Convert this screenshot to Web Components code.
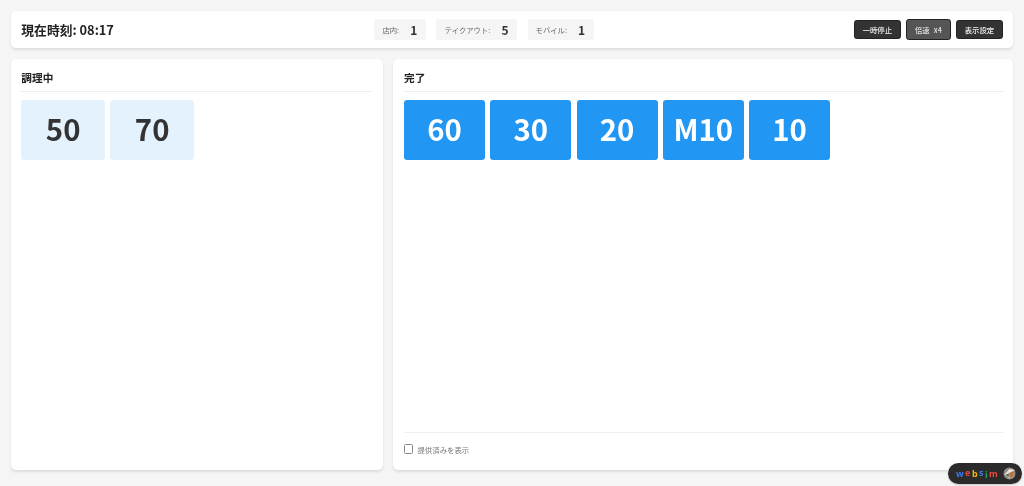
<!DOCTYPE html>
<html lang="ja"><head><meta charset="utf-8"><title>KDS</title>
<style>
html,body{margin:0;height:100%}
body{background:#f5f5f5;font-family:"Noto Sans CJK JP","Noto Sans",sans-serif;color:#333;overflow:hidden}
</style></head><body>
<kds-app></kds-app>
<template id="t-app"><style>
:host{display:flex;flex-direction:column;box-sizing:border-box;height:486px;padding:10.67px;gap:10.67px;filter:blur(.25px)}
.main{flex:1;min-height:0;display:grid;grid-template-columns:3fr 5fr;gap:10.67px;margin-bottom:5px}
</style>
<kds-header></kds-header>
<div class="main">
<kds-panel title="調理中"><kds-tile>50</kds-tile><kds-tile>70</kds-tile></kds-panel>
<kds-panel title="完了" footer><kds-tile done>60</kds-tile><kds-tile done>30</kds-tile><kds-tile done>20</kds-tile><kds-tile done>M10</kds-tile><kds-tile done>10</kds-tile><kds-check slot="footer">提供済みを表示</kds-check></kds-panel>
</div>
<kds-badge></kds-badge></template>

<template id="t-header"><style>
:host{display:flex;justify-content:space-between;align-items:center;height:37.5px;box-sizing:border-box;padding:0 10.67px;background:#fff;border-radius:5.33px;box-shadow:0 1.33px 2.67px rgba(0,0,0,.1)}
.time{font-size:12.8px;font-weight:700;color:#222;white-space:nowrap}
.stats{display:flex;gap:10.67px}
.btns{display:flex;gap:5.33px;align-items:center}
</style>
<div class="time">現在時刻: 08:17</div>
<div class="stats"><kds-stat label="店内:" value="1"></kds-stat><kds-stat label="テイクアウト:" value="5"></kds-stat><kds-stat label="モバイル:" value="1"></kds-stat></div>
<div class="btns"><kds-button>一時停止</kds-button><kds-button active>倍速 x4</kds-button><kds-button>表示設定</kds-button></div></template>

<template id="t-stat"><style>
:host{display:flex;align-items:center;height:21.33px;box-sizing:border-box;padding:0 8px;gap:10.67px;background:#f5f5f5;border-radius:2.67px;white-space:nowrap}
.l{font-size:7.33px;color:#666}
.v{font-size:12px;font-weight:700;color:#333;min-width:8px;text-align:center}
</style><span class="l"></span><span class="v"></span></template>

<template id="t-button"><style>
:host{display:flex;align-items:center;height:19.33px;box-sizing:border-box;padding:0 7.6px;background:#333;color:#f2f2f2;border:.67px solid #222;border-radius:2.67px;font-size:7.33px;font-weight:500;white-space:nowrap}
:host([active]){background:#555;color:#e0e0e0;height:20.67px;border:1.33px solid #222;word-spacing:2.6px;padding:0 8px}
</style><slot></slot></template>

<template id="t-panel"><style>
:host{display:flex;flex-direction:column;min-width:0;box-sizing:border-box;padding:10.67px;background:#fff;border-radius:5.33px;box-shadow:0 1.33px 2.67px rgba(0,0,0,.1)}
h2{margin:.8px 0 8px;padding-bottom:4.53px;border-bottom:.67px solid #eee;font-size:10.67px;line-height:16px;font-weight:700;color:#222}
.grid{flex:1;display:grid;grid-template-columns:repeat(auto-fill,minmax(80px,1fr));grid-auto-rows:60px;gap:5.33px;align-content:start}
.foot{border-top:.67px solid #eee;padding-top:8px;height:18.67px;box-sizing:content-box;display:none}
:host([footer]) .foot{display:block}
</style><h2></h2><div class="grid"><slot></slot></div><div class="foot"><slot name="footer"></slot></div></template>

<template id="t-tile"><style>
:host{display:flex;align-items:center;justify-content:center;padding-bottom:1.5px;box-sizing:border-box;background:#e3f2fd;color:#333;border-radius:3.2px;font-size:29.33px;font-weight:700;line-height:1}
:host([done]){background:#2196f3;color:#fff}
</style><slot></slot></template>

<template id="t-check"><style>
:host{display:flex;align-items:center;gap:4px;height:16px;font-size:7.4px;color:#777}
i{display:block;width:7.5px;height:7.5px;border:.8px solid #888;border-radius:1.5px;background:#fff}
</style><i></i><span><slot></slot></span></template>

<template id="t-badge"><style>
:host{position:fixed;right:2px;bottom:2px;width:74px;height:21px;box-sizing:border-box;padding:0 6px 0 8px;display:flex;align-items:center;justify-content:space-between;background:#2b2b2b;border-radius:11px;box-shadow:0 1px 2px rgba(0,0,0,.2)}
.w{display:flex;gap:1.4px;font:700 9px "Noto Sans",sans-serif;line-height:1}
svg{display:block}
</style>
<div class="w"><span style="color:#3b7dea">w</span><span style="color:#e5483c;transform:translateY(-1.5px)">e</span><span style="color:#f2b80f;transform:translateY(-.5px)">b</span><span style="color:#3b7dea;transform:translateY(-1px)">s</span><span style="color:#2e9e4f;transform:translateY(1px)">i</span><span style="color:#e5483c">m</span></div>
<svg width="13" height="13" viewBox="0 0 13 13"><circle cx="6.5" cy="6.5" r="6" fill="#8f8b84"/><path d="M1.5 7.5L6.5 2l5 1-1 6-4 2.5z" fill="#ece8de"/><path d="M6 6l5.3-2.5L10.5 9l-4 2.5z" fill="#b4763a"/><path d="M2.5 8l3.3-1.8v4z" fill="#5d5a55"/></svg></template>

<script>
function def(name,tpl,init){customElements.define(name,class extends HTMLElement{
constructor(){super();this.attachShadow({mode:"open"}).appendChild(document.getElementById(tpl).content.cloneNode(true));}
connectedCallback(){if(init)init(this,this.shadowRoot);}
});}
def("kds-button","t-button");
def("kds-tile","t-tile");
def("kds-check","t-check");
def("kds-badge","t-badge");
def("kds-stat","t-stat",(e,s)=>{s.querySelector(".l").textContent=e.getAttribute("label");s.querySelector(".v").textContent=e.getAttribute("value");});
def("kds-panel","t-panel",(e,s)=>{s.querySelector("h2").textContent=e.getAttribute("title");e.removeAttribute("title");});
def("kds-header","t-header");
def("kds-app","t-app");
</script>
</body></html>
